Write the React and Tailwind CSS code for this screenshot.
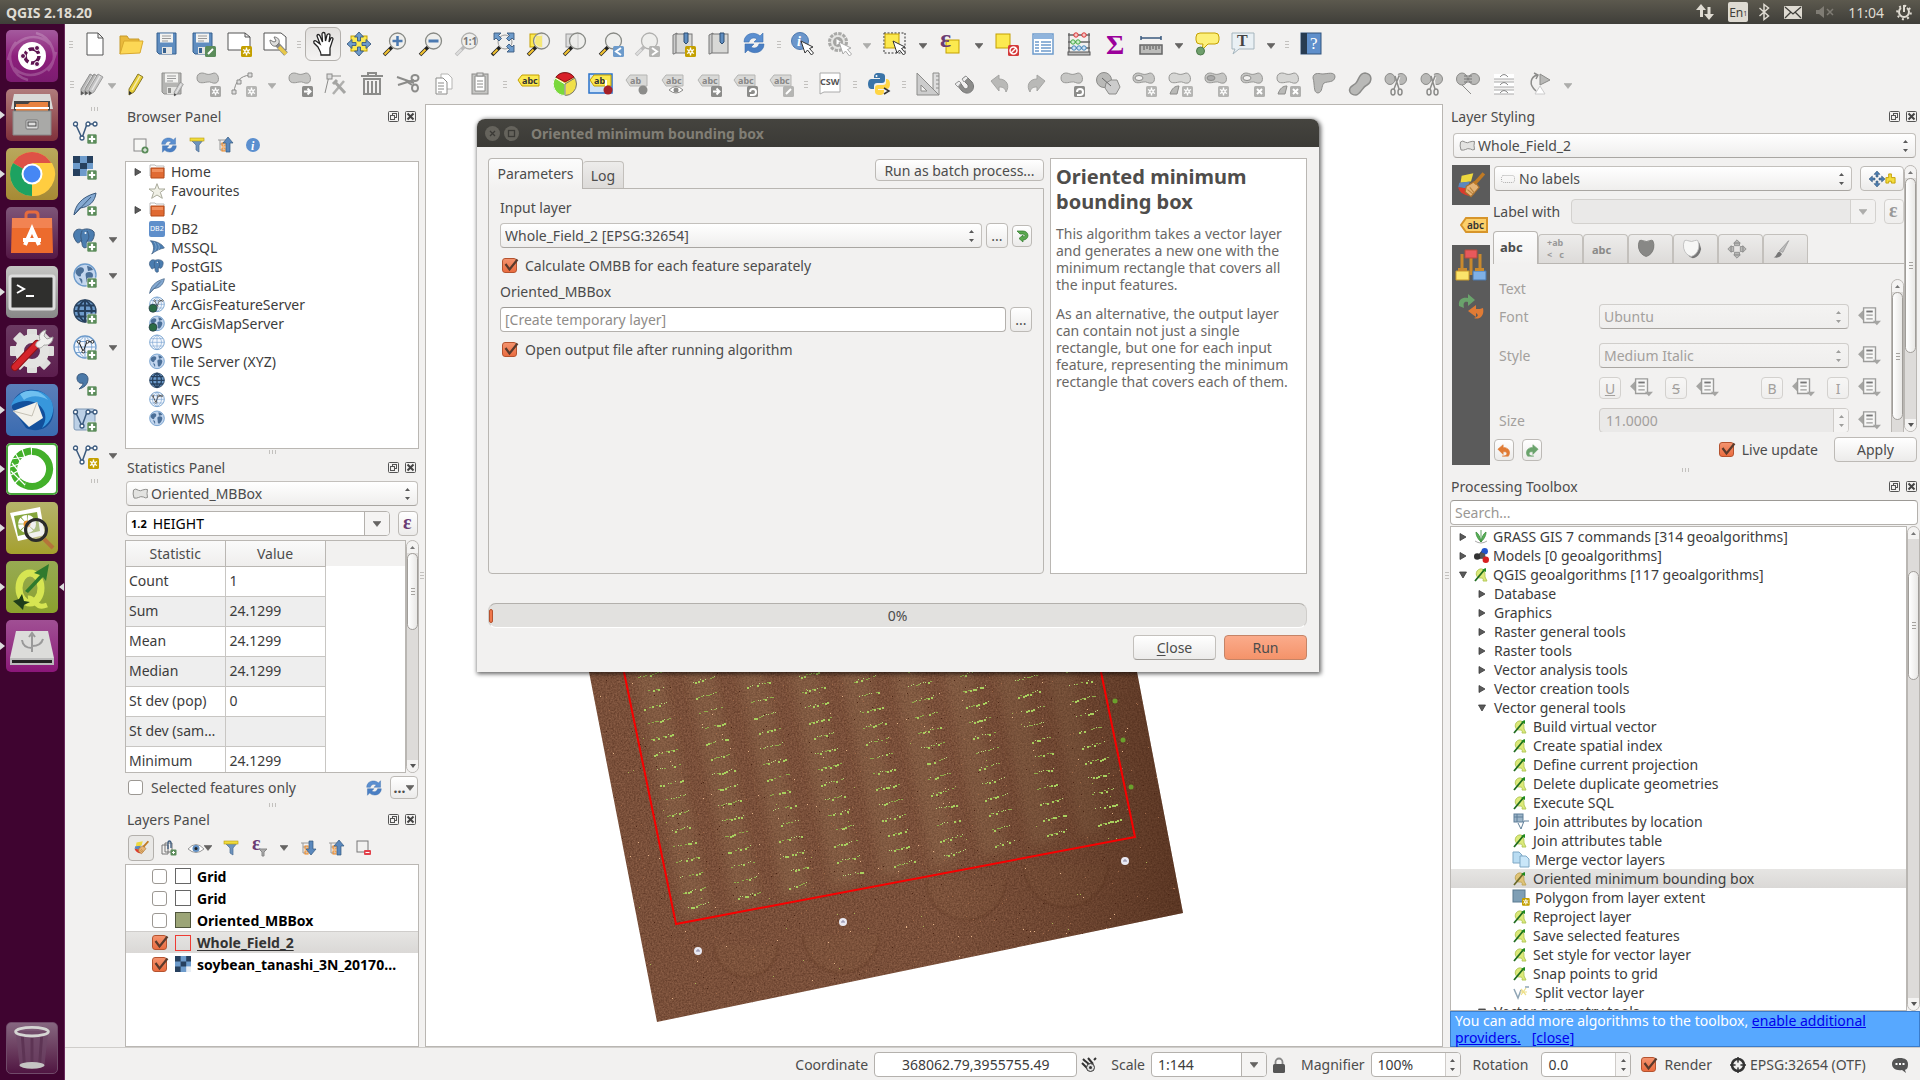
import React from "react";

/* ---------- primitives ---------- */

const Svg = ({ s = 24, vb = 24, className = "", children }) => (
  <svg width={s} height={s} viewBox={`0 0 ${vb} ${vb}`} className={`shrink-0 overflow-visible ${className}`} fill="none" aria-hidden="true">
    {children}
  </svg>
);

const G = "#b9b9b7";
const D = "#8c8c8a";
const BL = "#6d9bcb";
const NB = "#3b5a7e";
const sans = '"Noto Sans", sans-serif';

const Plus = ({ x = 14, y = 14 }) => (
  <g transform={`translate(${x} ${y})`}>
    <rect width="10" height="10" rx="1.5" fill="#5b8c5a" stroke="#f2f1f0" strokeWidth=".6" />
    <path d="M5 1.8v6.4M1.8 5h6.4" stroke="#fff" strokeWidth="2.2" />
  </g>
);
const Star = ({ x = 14, y = 14, c = "#c4a000" }) => (
  <g transform={`translate(${x} ${y})`}>
    <rect width="11" height="11" rx="1.5" fill={c} />
    <path d="M5.500 1.500v8M2 3.500l7 4M9 3.500l-7 4" stroke="#fff" strokeWidth="1.400" />
    <circle cx="5.500" cy="5.500" r="2.200" fill="#fff" />
    <circle cx="5.500" cy="5.500" r="1" fill={c} />
  </g>
);
const Badge = ({ c = "#8c8c8a", d, x = 14, y = 14 }) => (
  <g transform={`translate(${x} ${y})`}>
    <rect width="11" height="11" rx="1.5" fill={c} />
    <path d={d} stroke="#fff" strokeWidth="2" fill="none" />
  </g>
);
const ARROW_R = "M2 5.500h6M5.500 2.500l3 3-3 3";
const CROSS = "M3 3l5 5M8 3l-5 5";
const TURN = "M3 9h3a3 3 0 1 0-3-3";
const SLASH = "M3 8l5-5";

const Down = ({ dim }) => (
  <svg width="8" height="6" viewBox="0 0 8 6" className="shrink-0" aria-hidden="true">
    <path d="M0 0.500h8L4 5.500z" fill={dim ? "#adadab" : "#666462"} stroke={dim ? "#a5a5a3" : "#555"} strokeWidth="0.500" />
  </svg>
);
const UpDown = ({ dim }) => (
  <svg width="7" height="14" viewBox="0 0 7 14" className="shrink-0" aria-hidden="true">
    <path d="M1 4h5L3.500 1zM1 10h5L3.500 13z" fill={dim ? "#9e9e9c" : "#5a5a5a"} />
  </svg>
);

const Combo = ({ label, value, icon, dim, className = "" }) => (
  <div className={`relative flex h-[25px] items-center rounded border border-b-[#a9a6a2] bg-linear-to-b ${dim ? "border-[#d0cecb] from-[#f4f3f2] to-[#efeeed] text-[#a3a09d]" : "border-[#c3c0bc] from-white to-[#efeeed] text-[#4c4c4c]"} ${className}`}>
    {icon && <span className="pointer-events-none absolute left-[5px] flex">{icon}</span>}
    <select aria-label={label} disabled={dim} className={`h-full w-full appearance-none bg-transparent pr-5 opacity-100 outline-none ${icon ? "pl-6" : "pl-1"}`}>
      <option>{value}</option>
    </select>
    <span className="pointer-events-none absolute right-1.5 flex"><UpDown dim={dim} /></span>
  </div>
);

const Check = ({ id, checked, label }) => (
  <span className="relative flex size-[15px] shrink-0">
    <input id={id} type="checkbox" defaultChecked={checked} aria-label={label} className="peer size-[15px] appearance-none rounded-[3px] border border-[#9c9893] bg-white checked:border-[#b5532f] checked:bg-linear-to-b checked:from-[#f4936e] checked:to-[#ea6c3f]" />
    <svg width="18" height="15" viewBox="0 0 18 15" className="pointer-events-none absolute top-0 left-0 hidden peer-checked:block" aria-hidden="true">
      <path d="M3.500 6l4 5.500L15.500 1.500" stroke="#5a3a2c" strokeWidth="2.200" fill="none" />
    </svg>
  </span>
);

const SmallBtn = ({ label, dim, className = "", children }) => (
  <button aria-label={label} className={`flex shrink-0 items-center justify-center rounded border bg-linear-to-b ${dim ? "border-[#d3d1ce] from-[#f7f6f5] to-[#efeeed] text-[#a3a09d]" : "border-[#bdbab6] from-white to-[#ecebea] text-[#4c4c4c]"} ${className}`}>
    {children}
  </button>
);

const Spin = ({ id, value, dim, className = "" }) => (
  <div className={`flex h-[25px] overflow-hidden rounded border ${dim ? "border-[#cfccc9] bg-[#eae9e8] text-[#a3a09d]" : "border-[#b4b1ad] bg-white text-[#3c3c3c]"} ${className}`}>
    <input id={id} defaultValue={value} disabled={dim} className="min-w-0 flex-1 bg-transparent px-1.5 outline-none" />
    <span className="flex w-[15px] items-center justify-center border-l border-[#cfccc9] bg-[#f5f4f3]"><UpDown dim={dim} /></span>
  </div>
);

const VHandle = ({ className = "" }) => (
  <div className={`flex shrink-0 flex-col items-center justify-center gap-0.5 ${className}`}>
    {[0, 1, 2].map((i) => <i key={i} className="h-px w-1 bg-[#c3c1be]" />)}
  </div>
);
const HHandle = ({ className = "" }) => (
  <div className={`flex shrink-0 items-center justify-center gap-0.5 ${className}`}>
    {[0, 1, 2].map((i) => <i key={i} className="h-1 w-px bg-[#c3c1be]" />)}
  </div>
);

const Scroll = ({ before, thumb, after = "flex-1", className = "" }) => (
  <div className={`flex w-[13px] shrink-0 flex-col overflow-hidden rounded-full border border-[#b9b6b2] bg-[#dddbd9] ${className}`} aria-hidden="true">
    <div className={`flex h-3 shrink-0 items-center justify-center bg-[#f4f3f2] ${before}`}>
      <svg width="5" height="3"><path d="M0 3h5L2.500 0z" fill="#777" /></svg>
    </div>
    <div className={`flex shrink-0 flex-col items-center justify-center gap-0.5 rounded-full border border-[#a09d99] bg-linear-to-r from-white to-[#e9e8e6] ${thumb}`}>
      {[0, 1, 2].map((i) => <i key={i} className="h-px w-1 bg-[#a5a29e]" />)}
    </div>
    <div className={after} />
    <div className="flex h-3 shrink-0 items-center justify-center bg-[#f4f3f2]">
      <svg width="6" height="4"><path d="M0 0h6L3 4z" fill="#555" /></svg>
    </div>
  </div>
);

const DockTitle = ({ children }) => (
  <header className="flex h-[25px] shrink-0 items-center gap-1.5 pr-[3px] pl-px">
    <h2 className="flex-1">{children}</h2>
    <button aria-label={`Float ${children}`}>
      <Svg s={11} vb={11}><rect x=".5" y=".5" width="10" height="10" rx="1" stroke="#555" /><rect x="4.500" y="2.500" width="4" height="4" stroke="#555" /><rect x="2.500" y="4.500" width="4" height="4" fill="#f2f1f0" stroke="#555" /></Svg>
    </button>
    <button aria-label={`Close ${children}`}>
      <Svg s={11} vb={11}><rect x=".5" y=".5" width="10" height="10" rx="1" stroke="#555" /><path d="M2.500 2.500l6 6M8.500 2.500l-6 6" stroke="#444" strokeWidth="2" /></Svg>
    </button>
  </header>
);

/* ---------- toolbar icons ---------- */

const Lens = ({ dim, children }) => (
  <>
    <path d="M1 23l8-8" stroke={dim ? "#bbb" : "#222"} strokeWidth="3.500" />
    <path d="M1.500 22.500l5-5" stroke={dim ? "#ddd" : "#f2c230"} strokeWidth="2.200" />
    <circle cx="14.500" cy="9" r="8" fill="#eeeeec" fillOpacity=".85" stroke={dim ? "#b0b0ae" : "#888a85"} strokeWidth="1.300" />
    {children}
  </>
);
const Refresh = ({ s = 22 }) => (
  <Svg s={s} vb={22}>
    <path d="M1 10c0-9 11-11 16-6l3-3v9h-9l3-3C11 5 7 6 6 10z" fill="#5b8fd0" stroke="#3d6fae" strokeWidth=".6" />
    <path d="M21 12c0 9-11 11-16 6l-3 3v-9h9l-3 3c3 2 7 1 8-3z" fill="#4a7fc4" stroke="#3d6fae" strokeWidth=".6" />
  </Svg>
);
const Blob = ({ fill = "#c6c6c4" }) => (
  <path d="M1 6c0-5 5-6 9-4 3 1 5 0 8-1 5 0 6 9 2 10-4 1-5-2-9-1-4 1-10 2-10-4z" fill={fill} stroke="#989896" />
);
const Page = () => <path d="M4 1h11l5 5v17H4zM15 1v5h5" fill="#fff" stroke="#555" />;
const Floppy = ({ c = "#5f8dc0", e = "#37618f" }) => (
  <>
    <path d="M2 1h19v21H4l-2-2z" fill={c} stroke={e} />
    <rect x="5" y="1.500" width="13" height="9" fill="#f3f3f1" /><path d="M7 4h9M7 6.500h9M7 9h6" stroke="#999" />
    <rect x="7" y="15" width="10" height="7" fill="#e5e5e3" /><rect x="8" y="16" width="3" height="5" fill={e} />
  </>
);
const Pencil = ({ c = "#e8cf3a", e = "#8a7a2a" }) => (
  <><path d="M5 17L14 2l5 3-9 15-5 3z" fill={c} stroke={e} /><path d="M8 18l8-14" stroke="#fff" strokeOpacity=".6" strokeWidth="1.500" /><path d="M5 19v4l3-2z" fill="#333" /></>
);
const Tag = ({ dim, t = "abc" }) => (
  <>
    <path d="M1 8l4-5h17v11H5z" fill={dim ? "#d9d9d7" : "#fce94f"} stroke={dim ? "#b5b5b3" : "#c4a000"} />
    <text x="5" y="12" fontSize="9" fontWeight="700" fontFamily={sans} fill={dim ? "#888" : "#333"}>{t}</text>
  </>
);
const Book = () => (<><path d="M2 3l4-2v19l-3 2H2z" fill="#ccc" stroke="#777" /><rect x="5" y="2" width="16" height="19" fill="#d8d8d6" stroke="#777" /><path d="M13 1h4v9l-2 2-2-2z" fill="#5f8dc0" stroke="#2e4e72" /></>);
const Cursor = ({ x = 10, y = 9, dim }) => <path transform={`translate(${x} ${y})`} d="M0 0l4 12 2.500-3 4 5 2-2-4-4.500 3.500-1.500z" fill="#fff" stroke={dim ? "#aaa" : "#333"} />;
const FourWay = ({ c = NB, f = BL }) => (
  <path d="M12 0l4.500 5h-3v4h-3V5h-3zM12 24l4.500-5h-3v-4h-3v4h-3zM0 12l5-4.500v3h4v3H5v3zM24 12l-5-4.500v3h-4v3h4v3z" fill={f} stroke={c} strokeWidth=".9" />
);
const Scissor = () => (<><ellipse cx="6" cy="7" rx="5" ry="5.500" fill={G} stroke={D} /><ellipse cx="17" cy="7" rx="5.500" ry="5.500" fill={G} stroke={D} /><path d="M12 1l3 16M15 5l-5 12" stroke="#f2f1f0" strokeWidth="3" /><path d="M15 4l-5 13M11 4l4 13" stroke={D} strokeWidth="1.500" /><ellipse cx="9" cy="20" rx="2" ry="3" stroke={D} strokeWidth="1.500" /><ellipse cx="16" cy="20" rx="2" ry="3" stroke={D} strokeWidth="1.500" /></>);
const Eps = ({ size = 22, x = 0, y = 15, c = "#6b3c74" }) => <text x={x} y={y} fontSize={size} fontFamily='"Liberation Serif", serif' fontWeight="700" fill={c}>ε</text>;
const Vec = ({ c = NB }) => (<><path d="M2.500 4l6.500 14L14 4h8" stroke={c} strokeWidth="1.500" />{[[2.5, 4], [9, 18], [15, 4], [22, 4]].map(([x, y]) => <circle key={x} cx={x} cy={y} r="2" fill="#fff" stroke={c} strokeWidth="1.300" />)}</>);
const Checker = () => (<>
  <rect width="20" height="20" fill={BL} />
  <path d="M0 0h7v7H0zM14 0h6v7h-6zM7 7h7v6H7zM0 13h7v7H0z" fill="#26405e" /><path d="M14 13h6v7h-6z" fill="#e8eef5" />
</>);
const Feather = () => (<><path d="M1 23C2 14 8 5 23 1c-1 8-6 14-16 15z" fill="#84a9d1" stroke={NB} /><path d="M1 23L18 5" stroke={NB} /></>);
const Elephant = () => (<><path d="M1 5c2-5 7-4 8-3 4-2 10-1 12 2 1 4-1 8-3 10l-4-1v6c-3 2-5 0-5-4l-1-3c-1 3-4 4-5 1C1 10 0 8 1 5z" fill="#4b7db0" stroke={NB} /><path d="M9 3c-2 4-1 8 0 10M14 13c3-3 2-7 0-10" stroke={NB} /><circle cx="12.500" cy="5" r="1" fill="#fff" /></>);
const Globe = ({ dark, map }) => (<>
  <circle cx="12" cy="11" r="11" fill={dark ? "#6d9bcb" : map ? "#c3d6ee" : "#f4f8fd"} stroke={dark ? "#2c4561" : "#6d9bcb"} strokeWidth="1.300" />
  {map ? <path d="M4 5c3-3 7-2 7 1s-3 3-3 5-2 2-4 0-2-4 0-6zM13 9c3-2 7-1 7 2s-3 8-5 8-2-3-2-5-1-3 0-5zM14 2c2 0 5 1 6 4l-5 1zM6 14c3 0 4 2 3 6z" fill="#4b6f98" />
    : <path d="M1 11h22M3 5.500h18M3 16.500h18M12 0v22M12 0C3 6 3 16 12 22M12 0c9 6 9 16 0 22" stroke={dark ? "#26405e" : "#7ea6d3"} strokeWidth={dark ? 2 : 1} />}
</>);
const Funnel = () => <><path d="M1 2h14l-5 6v7l-3-2V8z" fill="#6d93bd" stroke="#4a6d93" strokeWidth=".7" /><rect x="1" y="1" width="14" height="3" fill="#f0dc3c" stroke="#b89c10" strokeWidth=".6" /></>;
const TreeArrow = ({ up }) => (<><path d="M1 3h9M3 3v10h4M3 7h4" stroke="#999" /><rect x="5" y="6" width="3" height="3" stroke="#f0861d" /><rect x="5" y="11" width="3" height="3" stroke="#f0861d" /><path d={up ? "M11 0l5 6h-3v9H9V6H6z" : "M11 15l5-6h-3V1H9v8H6z"} fill="#5a88bd" stroke="#34597f" strokeWidth=".7" /></>);
const Brush = ({ s = 24 }) => (
  <Svg s={s}><path d="M4 4l10-2-2 7-9 1z" fill="#edd83e" /><path d="M2 10l9-1-2 6-8-1z" fill="#5a87bd" /><path d="M1 14l8 1 3 6c-4 1-10-2-11-7z" fill="#dd3a2c" /><path d="M8 13l7-4 4 5-7 8-5-4z" fill="#e6b476" stroke="#a8702f" /><path d="M15 11l8-9" stroke="#c07a24" strokeWidth="3" /><path d="M9 16l5 4M11 14l4 5" stroke="#b9833f" /></Svg>
);

const row1 = [
  ["handle"],
  ["New project", <Page />],
  ["Open project", <><path d="M1 22V4h7l2 3h10v4" fill="#e9b93c" stroke="#c79a2a" /><path d="M1 22L5 9h19l-3 12z" fill="#fcd755" stroke="#d9a92e" /></>],
  ["Save project", <Floppy />],
  ["Save project as", <><Floppy /><Badge c="#5b8c5a" d={SLASH} /></>],
  ["New print composer", <><path d="M1 1h17l5 4v13H1zM18 1v4h5" fill="#fff" stroke="#555" /><Star /></>],
  ["Composer manager", <><path d="M1 1h17l5 4v13H1z" fill="#fff" stroke="#555" /><path d="M12 10l11 12" stroke="#888" strokeWidth="5" /><path d="M16 15l7 7" stroke="#e9c94a" strokeWidth="3.500" /><path d="M7 8c0 4 3 7 6 6l3-3c1-3-1-6-5-6l2 4-2 1z" fill="#ddd" stroke="#777" /></>],
  ["handle"],
  ["Pan map", <path d="M7 15L3 11c-1-2 1-3 2-2l4 3L6 4c0-2 2-2 3 0l2.500 6L11 2c0-2 3-2 3 0l.5 7L16 3c1-2 3-1 3 0l-1 7 2-4c1-1 2 0 2 1l-3 9v7H10c0-4-2-5-3-8z" fill="#fff" stroke="#222" strokeWidth="1.300" />, { on: true }],
  ["Pan to selection", <><rect x="4" y="4" width="16" height="15" fill="#fce94f" stroke="#c4a000" /><FourWay /></>],
  ["Zoom in", <Lens><path d="M14.500 4v10M9.500 9h10" stroke="#4b79b0" strokeWidth="2.500" /></Lens>],
  ["Zoom out", <Lens><path d="M9.500 9h10" stroke="#4b79b0" strokeWidth="3" /></Lens>],
  ["Zoom native", <Lens dim><text x="8" y="13" fontSize="10" fontWeight="700" fontFamily={sans} fill="#777">1:1</text></Lens>],
  ["Zoom full", <><path d="M1 23l8-8" stroke="#222" strokeWidth="3.500" /><path d="M2 22l4.500-4.500" stroke="#f2c230" strokeWidth="2" /><circle cx="14" cy="10" r="7" fill="#eee" stroke="#999" /><path d="M3 1h7L7.500 3.500l3 3-2.500 2.500-3-3L3 8zM23 1h-7l2.500 2.500-3 3 2.500 2.500 3-3L23 8zM23 20h-7l2.500-2.500-3-3 2.500-2.500 3 3 2-2z" fill={BL} stroke={NB} strokeWidth=".9" /></>],
  ["Zoom to selection", <><rect x="3" y="2" width="12" height="13" fill="#fce94f" stroke="#c4a000" /><Lens><path d="M9 4h6v11a8 8 0 0 1-7-4z" fill="#f5e878" /></Lens></>],
  ["Zoom to layer", <><rect x="3" y="2" width="12" height="13" fill="#ddd" stroke="#999" /><Lens><path d="M15 2v14" stroke="#ccc" /></Lens></>],
  ["Zoom last", <><Lens /><Badge c="#6d9bcb" d="M8 2L3 5.500 8 9" /></>],
  ["Zoom next", <><Lens dim /><Badge c="#b5b5b3" d="M3 2l5 3.500L3 9" /></>],
  ["New bookmark", <><Book /><Star /></>],
  ["Show bookmarks", <Book />],
  ["Refresh", <Refresh />],
  ["handle"],
  ["Identify features", <><circle cx="9" cy="9" r="8.500" fill="#6b96cb" stroke="#4f7ab0" /><text x="6" y="14" fontSize="14" fontStyle="italic" fontWeight="700" fontFamily='"Liberation Serif", serif' fill="#fff">i</text><Cursor /></>],
  ["Run feature action", <><circle cx="11" cy="10" r="8.500" fill="#e5e5e3" stroke="#a9a9a7" strokeWidth="3" strokeDasharray="3.300 1.150" /><circle cx="11" cy="10" r="5" fill="#a5a5a3" /><path d="M9.500 7v6l4.500-3z" fill="#fff" /><Cursor dim x={12} y={10} /></>, { arrow: "dim" }],
  ["Select features", <><rect x="1" y="1" width="21" height="20" stroke="#333" strokeDasharray="2 1.500" /><rect x="2" y="2" width="14" height="14" fill="#fce94f" stroke="#c4a000" /><Cursor /></>, { arrow: true }],
  ["Select by expression", <><rect x="7" y="8" width="13" height="13" fill="#fce94f" stroke="#c4a000" /><Eps size={26} x={1} /></>, { arrow: true }],
  ["Deselect all", <><rect x="1" y="2" width="14" height="14" fill="#fce94f" stroke="#c4a000" /><rect x="13" y="13" width="11" height="11" rx="1.500" fill="#d43a3a" /><circle cx="18.500" cy="18.500" r="3.500" stroke="#fff" strokeWidth="1.500" /><path d="M16 21l5-5" stroke="#fff" strokeWidth="1.500" /></>],
  ["Attribute table", <><rect x="2" y="2" width="20" height="20" fill="#fff" stroke="#6d9bcb" strokeWidth="1.500" /><rect x="3" y="3" width="18" height="4" fill="#8fb4dd" /><path d="M4 10h4M10 10h10M4 13h4M10 13h10M4 16h4M10 16h10M4 19h4M10 19h10" stroke="#6d9bcb" strokeWidth="1.500" /></>],
  ["Field calculator", <><path d="M2 1v20M22 1v20M1 3h22M1 10h22M1 16h22" stroke="#666" strokeWidth="1.300" /><rect x="1" y="20" width="22" height="3" fill="#bbb" stroke="#555" />{[9, 17].map((x) => <circle key={x} cx={x} cy="3" r="2.200" fill="#f6c5c5" stroke="#d33" />)}{[6, 11].map((x) => <circle key={x} cx={x} cy="10" r="2.200" fill="#cdeecd" stroke="#4a4" />)}{[7, 12, 17].map((x) => <circle key={x} cx={x} cy="16" r="2.200" fill="#cfe0f5" stroke="#48b" />)}</>],
  ["Statistics", <text x="3" y="22" fontSize="28" fontWeight="700" fontFamily='"Liberation Serif", serif' fill="#9b009b">Σ</text>],
  ["Measure", <><path d="M2 6h20M2 4v4M22 4v4" stroke={NB} strokeWidth="1.500" /><rect x="1" y="13" width="22" height="9" fill="#bcbcba" stroke="#666" strokeWidth="1.500" /><path d="M5 14v4M8 14v3M11 14v4M14 14v3M17 14v4M20 14v3" stroke="#555" /></>, { arrow: true }],
  ["Map tips", <><path d="M5 1h15q4 0 4 4v3q0 4-4 4h-7l-6 6 1-6H5q-4 0-4-4V5q0-4 4-4z" fill="#fdf07a" stroke="#c4a000" /><circle cx="5.500" cy="19" r="4" fill="#6f9f6c" stroke="#4d7a4a" /></>],
  ["Text annotation", <><path d="M1 1h22v16H8l-6 5 2-5H1z" fill="#e9f0f4" stroke="#a5b5bd" /><text x="6" y="14" fontSize="16" fontWeight="700" fontFamily='"Liberation Serif", serif' fill="#444">T</text></>, { arrow: true }],
  ["handle"],
  ["Help", <><rect x="2" y="1" width="20" height="21" fill="#5f8fcb" stroke="#33557c" /><rect x="2" y="1" width="6" height="21" fill="#283c52" /><text x="11" y="17" fontSize="17" fontFamily='"Liberation Serif", serif' fill="#fff">?</text></>],
];

const row2 = [
  ["handle"],
  ["Current edits", <><g opacity=".8"><g transform="translate(-4 0)"><Pencil c="#aaa" e="#777" /></g><Pencil c="#a5a5a3" e="#777" /><g transform="translate(4 0)"><Pencil c="#bbb" e="#888" /></g></g></>, { tight: true }],
  ["Toggle editing", <Pencil />],
  ["Save layer edits", <><Floppy c="#b5b5b3" e="#8f8f8d" /><g transform="translate(11 9) scale(.65)"><Pencil c="#ccc" e="#888" /></g></>],
  ["Add feature", <><Blob /><Star c="#a9a9a7" /></>],
  ["Add circular string", <><path d="M2 20C3 10 8 4 18 3" stroke={D} /><path d="M0 18h4v4H0zM5 8h4v4H5zM16 1h4v4h-4z" fill="#ddd" stroke={D} /><Star c="#b5b5b3" /></>, { arrow: "dim" }],
  ["Move feature", <><Blob /><Badge d={ARROW_R} /></>],
  ["Node tool", <><path d="M1 21L5 4h12" stroke={D} /><rect x="3" y="2" width="5" height="5" fill="#ddd" stroke={D} /><path d="M9 22L20 9" stroke="#b0b0ae" strokeWidth="2.500" /><path d="M11 10l10 11M9 12l4-4" stroke="#a5a5a3" strokeWidth="3" /></>],
  ["Delete selected", <><path d="M1 4h22M8 3V1h8v2" stroke={D} strokeWidth="2" /><path d="M4 7h16v15H4zM8 9v12M12 9v12M16 9v12" stroke={D} strokeWidth="2" /></>],
  ["Cut features", <><path d="M1 5l17 6M2 13l16-5" stroke={D} strokeWidth="2" /><ellipse cx="19" cy="6" rx="3.500" ry="3" stroke={D} strokeWidth="2" /><ellipse cx="19" cy="16" rx="3" ry="3.500" stroke={D} strokeWidth="2" /><path d="M10 9l6 4" stroke={D} strokeWidth="2" /></>],
  ["Copy features", <><path d="M9 2h7l4 4v11H9z" fill="#fff" stroke="#b5b5b3" /><path d="M4 6h7l4 4v12H4z" fill="#fff" stroke={D} /><path d="M6 11h6M6 14h6M6 17h6M6 20h4" stroke={D} /></>],
  ["Paste features", <><rect x="4" y="2" width="16" height="20" fill="#c5c5c3" stroke={D} /><path d="M7 4h10v15H7z" fill="#fff" stroke={D} /><path d="M9 9h6M9 12h6M9 15h6" stroke={D} /><rect x="9" y="1" width="6" height="3" fill="#ddd" stroke={D} /></>],
  ["handle"],
  ["Layer labeling options", <Tag />],
  ["Layer diagram options", <><circle cx="12" cy="12" r="11.500" fill="#f0e04a" stroke="#777" /><path d="M12 12V23.500A11.500 11.500 0 0 1 2 6z" fill="#7ad83c" stroke="#fff" /><path d="M12 12v11.500M12 12L22 6" stroke="#777" /><path d="M12 10L3 5a11.500 11.500 0 0 1 18 0z" fill="#d8202a" stroke="#8c1118" /></>],
  ["Highlight pinned labels", <><rect x="0" y="2" width="23" height="19" fill="#cfe2f7" stroke="#2a72c9" strokeWidth="1.500" /><Tag t="ab" /><path d="M17 8v8" stroke="#fff" strokeWidth="2" /><circle cx="19" cy="18" r="4.500" fill="#a52028" /></>],
  ["Pin labels", <><Tag dim t="ab" /><circle cx="18" cy="18" r="4.500" fill={D} /></>],
  ["Show labels", <><Tag dim /><path d="M8 18q7-7 14 0q-7 6-14 0z" fill="#fff" stroke={D} /><circle cx="15" cy="18" r="2.500" fill={D} /></>],
  ["Move label", <><Tag dim /><Badge d={ARROW_R} /></>],
  ["Rotate label", <><Tag dim /><Badge d={TURN} /></>],
  ["Change label", <><Tag dim /><Badge c="#b5b5b3" d={SLASH} /></>],
  ["handle"],
  ["CSW", <><path d="M2 1h20v19H6l-4 2z" fill="#fff" stroke="#aaa" /><text x="2" y="13" fontSize="9" fontWeight="700" fontFamily={sans} fill="#555">CSW</text></>],
  ["handle"],
  ["Python console", <><path d="M12 1c-5 0-5 2-5 5h6v1H4C0 7 0 17 4 17h3v-3c0-2 1-3 3-3h5c2 0 3-1 3-3V4c0-2-2-3-6-3z" fill="#3a74a8" /><path d="M12 23c5 0 5-2 5-5h-6v-1h9c4 0 4-10 0-10h-1v3c0 2-1 3-3 3h-5c-2 0-3 1-3 3v4c0 2 2 3 4 3z" fill="#ffd544" /><circle cx="9.500" cy="4" r="1" fill="#fff" /><path d="M17 16l5 3-5 3" stroke="#333" strokeWidth="1.500" /></>],
  ["handle"],
  ["Advanced digitizing", <><path d="M1 1v22h22z" fill="#ccc" stroke={D} /><path d="M5 13v6h6z" fill="#f2f1f0" stroke={D} /><path d="M17 1h6v22L17 17z" fill="#ddd" stroke={D} /><path d="M20 4h3M20 8h3M20 12h3M20 16h3" stroke={D} /></>],
  ["Snapping", <><path d="M4 12l6 7c7 6 15-2 10-9l-6-6-4 3 6 6c1 3-2 5-4 3L7 9z" fill="#8c8c8a" stroke="#777" /><path d="M3 12l4-3 2 2-3 4zM10 7l4-3 2 2-4 4z" fill="#eee" stroke="#999" /></>],
  ["Undo", <path d="M3 9l8-6v4c8 0 11 7 7 13-1-4-3-5-7-5v4z" fill={G} stroke="#a5a5a3" />],
  ["Redo", <path d="M21 9l-8-6v4C5 7 2 14 6 20c1-4 3-5 7-5v4z" fill={G} stroke="#a5a5a3" />],
  ["Rotate feature", <><Blob /><Badge d={TURN} /></>],
  ["Simplify feature", <><circle cx="8" cy="8" r="7.500" fill={G} stroke={D} /><path d="M10 11l5-3h6l3 7-4 7h-7l-4-6z" fill="#ccc" stroke={D} /><path d="M6 6l9 8" stroke="#666" /></>],
  ["Add ring", <><Blob /><ellipse cx="7" cy="6" rx="4" ry="2.500" fill="#f2f1f0" stroke={D} /><Star c="#b5b5b3" /></>],
  ["Add part", <><Blob fill="#d6d6d4" /><path d="M2 22c2-6 5-8 9-8l-2 8z" fill={G} stroke={D} /><Star c="#b5b5b3" /></>],
  ["Fill ring", <><Blob /><ellipse cx="7" cy="6" rx="4" ry="2.500" fill="#aaa" stroke={D} /><Star c="#b5b5b3" /></>],
  ["Delete ring", <><Blob /><ellipse cx="7" cy="6" rx="4" ry="2.500" fill="#f2f1f0" stroke={D} /><Badge c="#b0b0ae" d={CROSS} /></>],
  ["Delete part", <><Blob fill="#d6d6d4" /><path d="M2 22c2-6 5-8 9-8l-2 8z" fill={G} stroke={D} /><Badge c="#b0b0ae" d={CROSS} /></>],
  ["Reshape features", <path d="M1 6c0-5 5-5 9-4 5 0 13-3 13 3-1 6-7 4-11 6-3 3-1 9-6 10C1 21 3 12 1 6z" fill={G} stroke={D} />],
  ["Offset curve", <path d="M2 20c-2-5 3-6 6-9C11 8 11 1 17 1c8 1 7 9 2 12-5 2-6 9-11 10-3 0-5-1-6-3z" fill={G} stroke={D} strokeWidth="1.500" />],
  ["Split features", <Scissor />],
  ["Split parts", <Scissor />],
  ["Merge features", <><ellipse cx="6" cy="7" rx="5.500" ry="6" fill={G} stroke={D} /><ellipse cx="18" cy="7" rx="5.500" ry="5.500" fill={G} stroke={D} /><path d="M8 4h8M8 7h8M8 10h8" stroke="#777" /><path d="M6 13l9 9" stroke={D} /></>],
  ["Merge attributes", <><path d="M2 2h20v5H2zM2 10h20v5H2zM2 18h20v4H2z" fill="#fff" /><path d="M2 7h20M2 10h20M2 15h20M2 18h20M2 22h20" stroke="#aaa" /><path d="M8 5q4-5 8 0M8 13q4-5 8 0M8 21q4-5 8 0" stroke="#888" /></>],
  ["Rotate point symbols", <><path d="M8 19C0 12 3 5 9 3M6 1l4 2-2 4" stroke={D} strokeWidth="1.500" /><path d="M12 2l10 6-10 5z" fill={G} stroke={D} /><path d="M12 14l5 8H7z" fill="#fff" stroke="#ccc" /></>, { arrow: "dim" }],
];

const Toolbar = ({ items, hw }) => (
  <div className="flex h-10 items-center" role="toolbar">
    {items.map(([name, art, o = {}], i) =>
      name === "handle" ? (
        <VHandle key={i} className={hw} />
      ) : (
        <React.Fragment key={i}>
          <button aria-label={name} className={`flex h-[34px] shrink-0 items-center justify-center ${o.tight ? "w-7" : "w-9"} ${o.on ? "rounded-md border border-[#b3b0ac] bg-linear-to-b from-[#e2e0de] to-[#f4f3f2]" : ""}`}>
            <Svg>{art}</Svg>
          </button>
          {o.tight && <button aria-label={`${name} menu`} className="flex w-3 shrink-0 justify-center pt-1"><Down dim /></button>}
          {o.arrow && <button aria-label={`${name} menu`} className="flex w-5 shrink-0 justify-center pt-1"><Down dim={o.arrow === "dim"} /></button>}
        </React.Fragment>
      )
    )}
  </div>
);

const sideTools = [
  ["Add vector layer", <><Vec /><Plus /></>],
  ["Add raster layer", <><Checker /><Plus /></>],
  ["Add SpatiaLite layer", <><Feather /><Plus /></>],
  ["Add PostGIS layer", <><Elephant /><Plus /></>, true],
  ["Add WMS layer", <><Globe map /><Plus /></>, true],
  ["Add WCS layer", <><Globe dark /><Plus /></>],
  ["Add WFS layer", <><Globe /><g transform="translate(4 3) scale(.7)"><Vec c="#222" /></g><Plus /></>, true],
  ["Add delimited text layer", <><path d="M4 6c0-6 11-6 11 1 0 6-5 9-9 10 3-3 4-4 4-6-3 1-6-1-6-5z" fill="#4b79a8" stroke={NB} /><Plus /></>],
  ["Add virtual layer", <><rect x="1" y="1" width="21" height="21" rx="2" fill="#bcd0e6" stroke="#7f98b5" /><Vec /><Plus /></>],
  ["New shapefile layer", <><Vec /><Star x={15} /></>, true],
];

/* ---------- launcher ---------- */

const gearTeeth = [0, 45, 90, 135, 180, 225, 270, 315];

const launcher = [
  ["Dash", "bg-linear-to-b from-[#a45a9e] via-[#8e1f7d] to-[#7b1c70]", <><path d="M2 30C6 8 30 0 44 14M50 22c-4 22-28 30-42 16M30 3c16 4 24 24 12 38M22 50C6 46-2 26 10 12" stroke="#fff" strokeOpacity=".2" strokeWidth="2.500" /><circle cx="26" cy="26" r="14" fill="#fff" /><circle cx="26" cy="26" r="7" stroke="#5e1452" strokeWidth="3.500" strokeDasharray="12 2.700" />{[[17, 26], [31, 18], [31, 34]].map(([x, y]) => <circle key={y} cx={x} cy={y} r="2.500" fill="#5e1452" stroke="#fff" />)}</>],
  ["Files", "bg-linear-to-b from-[#b07c7c] to-[#80303b]", <><path d="M8 5h36l3 15H5z" fill="#d9d9d7" /><path d="M8 12h36v12H8z" fill="#444" /><path d="M10 15h12l2-2h18v10H10z" fill="#e8823f" /><path d="M9 18h34v2H9z" fill="#fff" /><path d="M7 22h38v24H7z" fill="#a9a9a7" stroke="#888" /><rect x="20" y="31" width="12" height="9" rx="1" fill="#ddd" stroke="#777" /><rect x="22" y="33" width="8" height="4" stroke="#444" /></>, true],
  ["Chrome", "bg-linear-to-b from-[#b9a85c] to-[#a68a34]", <><circle cx="26" cy="26" r="22" fill="#ffcd40" /><path d="M26 26L7 15a22 22 0 0 1 38 0z" fill="#de5246" /><path d="M26 26v22A22 22 0 0 1 7 15z" fill="#1da261" /><path d="M26 15h20a22 22 0 0 1-20 33l10-17z" fill="#ffcd40" /><circle cx="26" cy="26" r="10.500" fill="#fff" /><circle cx="26" cy="26" r="8.500" fill="#4687f4" /></>, true],
  ["Software", "bg-linear-to-b from-[#7e5578] to-[#541846]", <><path d="M20 12V8q0-3 3-3h6q3 0 3 3v4" stroke="#e56b3e" strokeWidth="3" /><path d="M6 11h40l1 35H5z" fill="#ec6b2d" /><path d="M6 11h40v10H6z" fill="#f28352" /><path d="M19 38l7-16 7 16M17 33h18" stroke="#fff" strokeWidth="4" /></>],
  ["Terminal", "bg-linear-to-b from-[#c5c5c3] to-[#888]", <><rect x="4" y="10" width="44" height="33" rx="2" fill="#2f2f2d" stroke="#ddd" strokeWidth="3" /><path d="M11 19l7 4-7 4M20 30h8" stroke="#fff" strokeWidth="2" /></>, true],
  ["Settings", "bg-linear-to-b from-[#6b3a62] to-[#5c1d4e]", <>{gearTeeth.map((a) => <rect key={a} x="21" y="4" width="10" height="10" rx="1" fill="#dededc" transform={`rotate(${a} 26 26)`} />)}<circle cx="26" cy="26" r="12.500" stroke="#e3e3e1" strokeWidth="9" /><path d="M9 42L31 19" stroke="#8e1317" strokeWidth="8" strokeLinecap="round" /><path d="M9 42L31 19" stroke="#d4252b" strokeWidth="6" strokeLinecap="round" /><path d="M30 21c-1-3 2-5 4-6-2-5 1-9 6-10l-2 6 3 3 6-2c0 5-4 9-9 8-2 2-4 5-8 1z" fill="#f0f0ee" stroke="#a5a5a3" /></>],
  ["Thunderbird", "bg-linear-to-b from-[#5b7fba] to-[#3a6bb0]", <><path d="M6 24C6 8 24 2 36 8c14 7 15 27 4 35-6 4-14 4-20 1z" fill="#12509c" /><path d="M5 22C10 4 36 1 45 16c5 10 1 22-9 28 5-8 4-15 0-20-6-9-22-9-31-2z" fill="#3797dc" /><path d="M14 10c8-6 22-4 28 6-8-5-18-5-24 0z" fill="#6fc0f0" /><path d="M7 27l24-9 6 16-14 9z" fill="#f3f1ea" /><path d="M7 27l19 5 5-14" stroke="#c5c1b5" /></>, true],
  ["Anaconda", "bg-white outline-2 -outline-offset-2 outline-[#4aa63c]", <><path d="M26 8.500a17.500 17.500 0 1 1-7 33.500" stroke="#43b02a" strokeWidth="7" /><path d="M25 8C4 10 2 36 19 42" stroke="#43b02a" strokeWidth="7" /><path d="M5 16l14-2M4 24l12-4M5 32l10-6M9 40l8-8M16 6l3 9M9 10l6 10M6 20l10 12M5 28l14 14" stroke="#fff" strokeWidth="1.200" /></>, true],
  ["Image viewer", "bg-linear-to-b from-[#b5b36a] to-[#a5a02c]", <><path d="M4 11l30-6 5 28-27 6z" fill="#fff" /><path d="M8 14l23-4 3 19-22 5z" fill="#85a63c" /><circle cx="21" cy="22" r="6" stroke="#fff" strokeWidth="6" strokeDasharray="4 .7" /><circle cx="21" cy="22" r="3.500" fill="#e8922d" /><circle cx="30" cy="28" r="10.500" fill="#ddd" fillOpacity=".45" stroke="#2b2b2b" strokeWidth="3" /><path d="M38 37l9 9" stroke="#b5743a" strokeWidth="4" /></>, true],
  ["QGIS", "bg-linear-to-b from-[#97aa52] to-[#8ba12c]", <><ellipse cx="24" cy="27" rx="11" ry="15" stroke="#d6e552" strokeWidth="7" /><path d="M22 37c8-1 6 12 19 7" stroke="#d6e552" strokeWidth="5" /><path d="M19 30L34 14l-6-2 15-9-3 17-3-4-15 16z" fill="#2f7a2d" /><path d="M7 40l6-2 3-5 2 7 6 1-6 3-1 5-4-4z" fill="#1e3d1a" /></>, true],
  ["USB drive", "bg-linear-to-b from-[#a04f94] to-[#8b1679]", <><path d="M10 11h32l6 27H4z" fill="#dcdcda" /><path d="M4 38h44v7H4z" fill="#bbb" /><path d="M6 40h40v3H6z" fill="#222" /><path d="M26 32V15M26 28q-9 0-10-8M26 26q9 0 11-7M23 17l3-4 3 4" stroke="#999" strokeWidth="2" /></>, true],
];

const Launcher = () => (
  <nav className="flex w-[65px] shrink-0 flex-col justify-between border-r border-[#6a2a5c] bg-[#3f0430] pt-1.5 pb-1.5">
    <ul className="flex flex-col gap-[7px]">
      {launcher.map(([name, bg, art, run]) => (
        <li key={name} className="relative flex items-center pl-1.5">
          {run && <svg width="5" height="8" className="absolute left-0" aria-hidden="true"><path d="M0 0l5 4-5 4z" fill="#ddd" /></svg>}
          <button aria-label={name} className={`flex size-[52px] items-center justify-center overflow-hidden rounded-[5px] ${bg}`}><Svg s={52} vb={52}>{art}</Svg></button>
          {name === "QGIS" && <svg width="5" height="8" className="absolute right-0" aria-hidden="true"><path d="M5 0L0 4l5 4z" fill="#ddd" /></svg>}
        </li>
      ))}
    </ul>
    <button aria-label="Trash" className="ml-1.5 size-[52px] rounded-[5px] border border-[#704a69] bg-linear-to-b from-[#866780] to-[#501542]">
      <Svg s={50} vb={52}><path d="M9 8l4 36q13 6 26 0l4-36z" fill="#6e4766" fillOpacity=".7" /><path d="M16 14l2 28M26 14v30M36 14l-2 28" stroke="#5d3454" strokeWidth="3" /><ellipse cx="26" cy="9" rx="17" ry="4.500" stroke="#d5d5d3" strokeWidth="3" /><ellipse cx="26" cy="44" rx="13" ry="3.500" fill="#c5c5c3" /></Svg>
    </button>
  </nav>
);

/* ---------- left docks ---------- */

const Folder = () => <Svg s={16} vb={16}><path d="M1 12V1h5l1 1h8v10z" fill="#fff" stroke="#bbb" /><path d="M2 14V4h13v10z" fill="#e06a33" stroke="#b34a1a" /><path d="M3 5h11v3H3z" fill="#f08e5c" /></Svg>;
const Mini = ({ children }) => <Svg s={16}>{children}</Svg>;
const Dot = () => <circle cx="6" cy="17" r="6" fill="#2a6b45" stroke="#234" />;

const browserItems = [
  ["Home", <Folder />, true],
  ["Favourites", <Mini><path d="M12 1l3 8h9l-7 5 3 9-8-5-8 5 3-9-7-5h9z" fill="#f0f0e6" stroke="#aaab9c" strokeWidth="1.500" /></Mini>],
  ["/", <Folder />, true],
  ["DB2", <Svg s={16} vb={16}><rect width="16" height="16" rx="2" fill="#5f8fcb" /><text x="1" y="10" fontSize="7" fontFamily={sans} fill="#fff">DB2</text></Svg>],
  ["MSSQL", <Mini><path d="M2 1c10 1 18 5 21 11-6 1-13 4-19 9 4-6 4-14-2-20z" fill="#4b7db0" stroke={NB} /><path d="M8 3c4 6 3 11 0 14M13 5c3 4 3 7 1 10" stroke="#9bbcdc" /></Mini>],
  ["PostGIS", <Mini><Elephant /></Mini>],
  ["SpatiaLite", <Mini><Feather /></Mini>],
  ["ArcGisFeatureServer", <Mini><Globe /><g transform="translate(7 3) scale(.6)"><Vec c="#222" /></g><Dot /></Mini>],
  ["ArcGisMapServer", <Mini><Globe map /><Dot /></Mini>],
  ["OWS", <Mini><Globe /></Mini>],
  ["Tile Server (XYZ)", <Mini><Globe map /></Mini>],
  ["WCS", <Mini><Globe dark /></Mini>],
  ["WFS", <Mini><Globe /><g transform="translate(4 3) scale(.7)"><Vec c="#222" /></g></Mini>],
  ["WMS", <Mini><Globe map /></Mini>],
];

const TreeArrowIcon = ({ open }) => (
  <svg width="8" height="8" viewBox="0 0 8 8" className="shrink-0" aria-hidden="true">
    <path d={open ? "M0.500 1h7L4 7z" : "M1 0.500v7L7 4z"} fill="#5a5a5a" stroke="#3c3c3c" strokeWidth=".8" />
  </svg>
);

const stats = [["Count", "1"], ["Sum", "24.1299"], ["Mean", "24.1299"], ["Median", "24.1299"], ["St dev (pop)", "0"], ["St dev (sam…", ""], ["Minimum", "24.1299"]];

const layers = [
  ["Grid", false, "border-[#666] bg-white"],
  ["Grid", false, "border-[#666] bg-white"],
  ["Oriented_MBBox", false, "border-[#4f553c] bg-[#9ca577]"],
  ["Whole_Field_2", true, "border-[#ee3b33] bg-transparent"],
  ["soybean_tanashi_3N_20170…", true, null],
];

const Polygon = () => <svg width="16" height="12" viewBox="0 0 16 12" aria-hidden="true"><path d="M1.500 2q2-2 5 .3 2 1 4-.3 3-1 5-.5-1 4 0 8-2 1-4-.5-3-1-5 .5-2 1-4.500.5Q.5 6 1.500 2z" fill="#e3e3e1" stroke="#8f8f8d" /></svg>;

const LeftDocks = () => (
  <aside className="flex w-[294px] shrink-0 flex-col">
    <div className="pl-px"><DockTitle>Browser Panel</DockTitle></div>
    <div className="flex h-8 shrink-0 items-center pl-0.5">
      {[
        ["Add selected layers", <><rect x="1" y="2" width="12" height="12" fill="#f7f7f5" stroke="#888" /><circle cx="12" cy="13" r="3.500" fill="#5b8c5a" /><path d="M12 11v4M10 13h4" stroke="#fff" /></>],
        ["Refresh", null],
        ["Filter", <Funnel />],
        ["Collapse", <TreeArrow up />],
        ["Properties", <><circle cx="8" cy="8" r="7" fill="#5b8fcf" /><text x="6" y="12.500" fontSize="12" fontWeight="700" fontStyle="italic" fontFamily='"Liberation Serif", serif' fill="#fff">i</text></>],
      ].map(([n, a]) => (
        <button key={n} aria-label={n} className="flex w-7 justify-center">{a ? <Svg s={16} vb={16}>{a}</Svg> : <Refresh s={16} />}</button>
      ))}
    </div>
    <ul className="h-72 shrink-0 overflow-hidden border border-[#bab7b3] bg-white text-[#3c3c3c]">
      {browserItems.map(([n, ic, arrow]) => (
        <li key={n} className="flex h-[19px] items-center pl-2">
          <span className="flex w-[15px]">{arrow && <TreeArrowIcon />}</span>
          {ic}
          <span className="pl-1.5">{n}</span>
        </li>
      ))}
    </ul>
    <HHandle className="h-1.5" />

    <div className="pl-px"><DockTitle>Statistics Panel</DockTitle></div>
    <Combo label="Layer" value="Oriented_MBBox" icon={<Polygon />} className="mt-px mr-px ml-px shrink-0" />
    <div className="mt-[5px] mr-px ml-px flex h-[25px] shrink-0 gap-2">
      <div className="flex flex-1 overflow-hidden rounded border border-[#b4b1ad] bg-white text-black">
        <span className="flex items-center pl-1 text-[11px] font-bold">1.2</span>
        <input aria-label="Field" defaultValue="HEIGHT" className="min-w-0 flex-1 pl-1.5 outline-none" />
        <button aria-label="Choose field" className="flex w-[25px] items-center justify-center border-l border-[#b4b1ad] bg-[#f5f4f3]"><Down /></button>
      </div>
      <SmallBtn label="Expression" className="w-5"><Svg s={14} vb={14}><Eps size={20} x={2} y={12} /></Svg></SmallBtn>
    </div>
    <div className="mt-1 flex h-[233px] shrink-0">
      <div className="flex-1 overflow-hidden border border-[#bab7b3] bg-white">
        <table className="w-full table-fixed border-collapse text-left text-[#3c3c3c]">
          <colgroup><col className="w-[99px]" /><col className="w-[100px]" /><col /></colgroup>
          <thead>
            <tr className="h-[25px] bg-linear-to-b from-[#fafafa] to-[#efeeed] text-center text-[#4c4c4c]">
              <th className="border-r border-b border-[#bab7b3] p-0 font-normal">Statistic</th>
              <th className="border-r border-b border-[#bab7b3] p-0 font-normal">Value</th>
              <td className="bg-[#f2f1f0] p-0" />
            </tr>
          </thead>
          <tbody>
            {stats.map(([a, b], i) => (
              <tr key={a} className="h-[30px]">
                <td className={`truncate border-r border-b border-[#c8c6c3] p-0 pb-0.5 pl-[3px] ${i % 2 ? "bg-[#eeeeee]" : ""}`}>{a}</td>
                <td className={`border-r border-b border-[#c8c6c3] p-0 pb-0.5 pl-1 ${i % 2 ? "bg-[#eeeeee]" : ""}`}>{b}</td>
                <td className="p-0" />
              </tr>
            ))}
          </tbody>
        </table>
      </div>
      <Scroll thumb="h-[77px]" />
    </div>
    <div className="flex h-[29px] shrink-0 items-center gap-2 pr-px pl-[3px]">
      <Check id="sel" />
      <label htmlFor="sel" className="flex-1">Selected features only</label>
      <button aria-label="Refresh statistics"><Refresh s={16} /></button>
      <SmallBtn label="More statistics" className="h-[23px] w-7 gap-px"><span className="font-bold">...</span><Down /></SmallBtn>
    </div>
    <HHandle className="h-[5px]" />

    <div className="pl-px"><DockTitle>Layers Panel</DockTitle></div>
    <div className="mb-px flex h-[31px] shrink-0 items-center pl-[3px]">
      <button aria-label="Layer styling" className="flex h-[26px] w-[26px] items-center justify-center rounded border border-[#b3b0ac] bg-[#e9e8e6]"><Brush s={15} /></button>
      <button aria-label="Add group" className="flex w-[30px] justify-center"><Svg s={16} vb={16}><path d="M1 5h6v9H1zM4 3h7v9H4z" fill="#f2f1f0" stroke="#777" /><path d="M7 9V3q0-2 1.500-2T10 3v5" stroke="#3b5a7e" strokeWidth="1.300" /><rect x="9.500" y="9.500" width="6" height="6" rx="1" fill="#5b8c5a" /><path d="M12.500 11v3M11 12.500h3" stroke="#fff" /></Svg></button>
      <button aria-label="Visibility" className="flex w-8 items-center justify-center"><Svg s={16} vb={16}><path d="M0 9q8-9 16 0q-8 7-16 0z" fill="#fff" stroke="#999" /><circle cx="8" cy="8.500" r="3.500" fill="#5f8dc0" /><circle cx="8" cy="8.500" r="1.500" fill="#222" /></Svg><Down /></button>
      <button aria-label="Filter legend" className="flex w-[30px] justify-center"><Svg s={16} vb={16}><Funnel /></Svg></button>
      <button aria-label="Filter by expression" className="flex w-[28px] justify-center"><Svg s={16} vb={16}><Eps size={20} y={10} /><path d="M7 9h8l-3 3v4h-2v-4z" fill="#aaa" stroke="#888" /></Svg></button>
      <button aria-label="Expression menu" className="flex w-5 justify-center"><Down /></button>
      <button aria-label="Expand all" className="flex w-[28px] justify-center"><Svg s={16} vb={16}><TreeArrow /></Svg></button>
      <button aria-label="Collapse all" className="flex w-[27px] justify-center"><Svg s={16} vb={16}><TreeArrow up /></Svg></button>
      <button aria-label="Remove layer" className="flex w-[28px] justify-center"><Svg s={16} vb={16}><rect x="2" y="1" width="11" height="11" stroke="#777" /><rect x="9" y="10" width="7" height="5" rx="1" fill="#e2404a" /><path d="M10.500 12.500h4" stroke="#fff" /></Svg></button>
    </div>
    <ul className="min-h-0 flex-1 overflow-hidden border border-[#bab7b3] bg-white font-bold text-black">
      {layers.map(([n, on, sw], i) => (
        <li key={i} className={`flex h-[22px] items-center pl-[26px] ${i === 3 ? "border-t border-[#cfcdcb] bg-linear-to-b from-[#e6e5e3] to-[#dad8d6] text-[#333]" : ""}`}>
          <Check id={`layer-${i}`} checked={on} />
          <span className="flex w-[28px] justify-center pl-1">{sw ? <i className={`size-4 border ${sw}`} /> : <Svg s={16} vb={20}><Checker /></Svg>}</span>
          <label htmlFor={`layer-${i}`} className={`ml-0.5 whitespace-nowrap ${i === 3 ? "underline underline-offset-2" : ""}`}>{n}</label>
        </li>
      ))}
    </ul>
  </aside>
);

/* ---------- map ---------- */

const rnd = (n) => {
  const v = Math.sin(n * 127.1) * 43758.5453;
  return v - Math.floor(v);
};
const plants = [];
for (let c = 0; c < 9; c++) {
  for (let r = 0; r < 17; r++) {
    const x = 260 + c * 51.5 - r * 3.2;
    const y = 803 - c * 10.5 - r * 15.4;
    if (y < 560) continue;
    for (let k = 0; k < 10; k++) {
      const q = rnd(c * 311 + r * 17 + k);
      if (q > 0.12) plants.push([Math.round(x + k * 2.4), Math.round(y - k * 0.6 + (q - 0.5) * 2), q]);
    }
  }
}
const specks = Array.from({ length: 700 }, (_, i) => [165 + rnd(i + 1) * 590, 565 + rnd(i + 900) * 350, rnd(i + 2000)]);

const MapDrawing = () => (
  <svg viewBox="0 0 1017 942" preserveAspectRatio="xMinYMin meet" className="absolute top-0 left-0 h-[942px] w-[1017px]" role="img" aria-label="Field orthophoto">
    <defs>
      <clipPath id="field"><path d="M100 250L150 500 231 917 757 808 711 567 650 250z" /></clipPath>
      <filter id="soil" x="0" y="0" width="100%" height="100%" colorInterpolationFilters="sRGB">
        <feTurbulence type="fractalNoise" baseFrequency="0.6" numOctaves="2" seed="4" />
        <feColorMatrix values="0.24 0.06 0 0 0.325  0.2 0.06 0 0 0.18  0.17 0.05 0 0 0.115  0 0 0 0 1" />
      </filter>
      <filter id="soft" x="-20%" y="-20%" width="140%" height="140%"><feGaussianBlur stdDeviation="4" /></filter>
      <linearGradient id="shade" x1="0" x2="1" y1="0" y2="0">
        <stop offset="0.600" stopColor="#3a1c0c" stopOpacity="0" />
        <stop offset="0.800" stopColor="#3a1c0c" stopOpacity=".2" />
        <stop offset="1" stopColor="#3a1c0c" stopOpacity=".5" />
      </linearGradient>
    </defs>
    <g clipPath="url(#field)">
      <rect x="100" y="540" width="670" height="400" filter="url(#soil)" />
      <g filter="url(#soft)">
        {[0, 1, 2, 3, 4, 5, 6, 7, 8].map((c) => (
          <path key={c} d={`M${208 + c * 51.5} 560h26l${50 - c * 2} ${246 - c * 10}-26 5z`} fill="#a08560" fillOpacity=".2" />
        ))}
      </g>
      {[[320, 840, 32], [415, 830, 38], [540, 775, 40], [640, 760, 42]].map(([x, y, r]) => (
        <path key={x} d={`M${x - r} ${y}a${r} ${r} 0 0 0 ${r * 2} 0`} stroke="#512a19" strokeOpacity=".16" strokeWidth="3" fill="#97704f" fillOpacity=".08" />
      ))}
      <rect x="160" y="560" width="600" height="370" fill="url(#shade)" />
      {specks.map(([x, y, q], i) => <rect key={i} x={Math.round(x)} y={Math.round(y)} width="1" height="1" fill={q > 0.85 ? "#e6b58a" : q > 0.75 ? "#a9b455" : q > 0.4 ? "#4a2414" : "#a06a4a"} />)}
      {plants.map(([x, y, q], i) => <rect key={i} x={x} y={y} width={q > 0.4 ? 2 : 1} height={q > 0.7 ? 2 : 1} fill={q > 0.7 ? "#a8cf5e" : q > 0.4 ? "#8fae4a" : "#b9d97a"} />)}
      {[[689, 596], [697, 635], [705, 682]].map(([x, y]) => <circle key={y} cx={x} cy={y} r="2.500" fill="#6aa02c" />)}
    </g>
    <path d="M198 567L250 819 709 732 675 567" stroke="#f80000" strokeWidth="2" fill="none" />
    {[[272, 846], [417, 817], [699, 756]].map(([x, y]) => (
      <g key={x}><circle cx={x} cy={y} r="4" fill="#e9e9f2" /><path d={`M${x - 2} ${y}h4M${x} ${y - 2}v2`} stroke="#8a88a5" /></g>
    ))}
  </svg>
);

/* ---------- dialog ---------- */

const Turn = ({ c, flip, s = 16 }) => (
  <Svg s={s} vb={16}><g transform={flip ? "translate(16 0) scale(-1 1)" : ""}><path d="M1 7l6-5v3c7 0 9 6 6 10H6c4 0 6-2 5-4-1-1-2-1-4-1v3z" fill={c} stroke={c} strokeOpacity=".7" /></g></Svg>
);

const Dialog = () => (
  <section role="dialog" aria-label="Oriented minimum bounding box" className="absolute top-3.5 left-[51px] flex h-[553px] w-[842px] flex-col rounded-t-lg bg-[#f2f1f0] shadow-[1px_1px_4px_1px_rgba(0,0,0,0.6)]">
    <header className="flex h-7 shrink-0 items-center rounded-t-lg bg-linear-to-b from-[#45443f] to-[#3b3a36] pl-2">
      <button aria-label="Close window" className="mr-1"><Svg s={15} vb={15}><circle cx="7.500" cy="7.500" r="7.500" fill="#65635c" /><path d="M5 5l5 5M10 5l-5 5" stroke="#3b3a36" strokeWidth="1.300" /></Svg></button>
      <button aria-label="Maximize window"><Svg s={15} vb={15}><circle cx="7.500" cy="7.500" r="7.500" fill="#65635c" /><rect x="4.500" y="4.500" width="6" height="6" stroke="#3b3a36" strokeWidth="1.300" /></Svg></button>
      <h1 className="pl-3 font-bold text-[#817e75]">Oriented minimum bounding box</h1>
    </header>
    <div className="flex min-h-0 flex-1 flex-col pt-[11px] pr-3 pl-[11px]">
      <div className="flex h-[416px] shrink-0 gap-1.5">
        <div className="flex flex-1 flex-col">
          <div className="flex h-[30px] items-end justify-between">
            <div role="tablist" className="flex items-end">
              <button role="tab" aria-selected="true" className="relative -mb-px h-[31px] w-[95px] rounded-t border border-b-0 border-[#b9b6b2] bg-linear-to-b from-[#fcfcfc] to-[#f2f1f0] pb-0.5">Parameters</button>
              <button role="tab" className="h-[27px] w-[41px] rounded-t border border-b-0 border-l-0 border-[#c3c0bc] bg-linear-to-b from-[#edeceb] to-[#dddbd9]">Log</button>
            </div>
            <SmallBtn label="Run as batch process" className="mb-[7px] h-[22px] w-[169px]">Run as batch process...</SmallBtn>
          </div>
          <div className="flex flex-1 flex-col rounded-b border border-[#b9b6b2] px-[11px] pt-2">
            <label htmlFor="input-layer" className="h-[26px] leading-[22px]">Input layer</label>
            <div className="flex items-center gap-1">
              <Combo label="Input layer" value="Whole_Field_2 [EPSG:32654]" className="flex-1" />
              <SmallBtn label="Browse" className="h-[25px] w-[22px]">...</SmallBtn>
              <SmallBtn label="Iterate over features" className="h-[22px] w-5">
                <Svg s={14} vb={14}><path d="M2 2h6a5 4.500 0 0 1 0 9v2L4 9.500 8 6v2q2-.5 2-1.500T8 5H5z" fill="#5aa84f" stroke="#2f7a2d" strokeWidth=".7" /></Svg>
              </SmallBtn>
            </div>
            <div className="mt-[9px] flex h-[17px] items-center gap-2 pl-0.5">
              <Check id="ombb" checked /><label htmlFor="ombb">Calculate OMBB for each feature separately</label>
            </div>
            <label htmlFor="mbbox" className="mt-[7px] h-[26px] leading-[22px]">Oriented_MBBox</label>
            <div className="flex gap-1">
              <input id="mbbox" placeholder="[Create temporary layer]" className="h-[25px] flex-1 rounded border border-[#b4b1ad] border-t-[#9c9995] bg-white px-1 outline-none placeholder:text-[#8f8c89]" />
              <SmallBtn label="Browse output" className="h-[25px] w-[22px]">...</SmallBtn>
            </div>
            <div className="mt-[9px] flex h-[17px] items-center gap-2 pl-0.5">
              <Check id="open" checked /><label htmlFor="open">Open output file after running algorithm</label>
            </div>
          </div>
        </div>
        <article className="w-[257px] shrink-0 border border-[#bab7b3] bg-white px-[5px] pt-[5px] leading-[17px] text-[#6a6866]">
          <h3 className="text-[20px] leading-[25px] font-bold text-[#4f4d4b]">Oriented minimum bounding box</h3>
          <p className="mt-[11px]">This algorithm takes a vector layer<br />and generates a new one with the<br />minimum rectangle that covers all<br />the input features.</p>
          <p className="mt-3">As an alternative, the output layer<br />can contain not just a single<br />rectangle, but one for each input<br />feature, representing the minimum<br />rectangle that covers each of them.</p>
        </article>
      </div>
      <div role="progressbar" aria-valuenow="0" className="relative mt-[29px] flex h-[25px] shrink-0 items-center justify-center rounded-lg border border-t-[#b3b0ac] border-r-[#cfcdca] border-b-white border-l-[#cfcdca] bg-[#e2e1df]">
        <i className="absolute left-0 h-3.5 w-1 rounded-xs border border-[#b5532f] bg-[#f0764a]" />
        0%
      </div>
      <div className="mt-[7px] flex justify-end gap-2">
        <button className="h-[25px] w-[83px] rounded border border-[#c3c0bc] border-b-[#a09d99] bg-linear-to-b from-white to-[#ecebea]"><span className="underline underline-offset-2">C</span>lose</button>
        <button className="h-[25px] w-[83px] rounded border border-[#c58467] bg-linear-to-b from-[#fbab8b] to-[#f4936a]">Run</button>
      </div>
    </div>
  </section>
);

/* ---------- right docks ---------- */

const Override = () => (
  <Svg s={22}><path d="M-1 10l6-6v12z" fill="#a5a5a3" /><path d="M5 2h13v16H5z" fill="#f7f7f6" stroke="#9c9c9a" strokeWidth="1.500" /><path d="M8 6h7" stroke="#777" strokeWidth="2" /><path d="M8 10h7M8 14h7" stroke="#9c9c9a" strokeWidth="1.500" /><path d="M15 16h9l-4.500 5z" fill="#a5a5a3" /></Svg>
);
const Shield = ({ f, c, sh }) => <Svg s={20}>{sh && <path d="M5 5q2-3 4 0 5 1 8 0 2-2 4 0l2 7q-2 10-10 11-7-2-9-10z" fill="#777" />}<path d="M3 2q2-1 4 0 5 2 8 0 3-1 4 0 2 4 1 9-2 8-9 10-7-2-9-10-1-5 1-9z" fill={f} stroke={c} /></Svg>;

const styleTabs = [
  <span className="text-[13px] font-bold">abc</span>,
  <span className="text-left text-[9px] leading-[12px] font-bold text-[#999]">+ab<br />&lt; &nbsp; c</span>,
  <span className="text-[11px] font-bold text-[#8a8a88]">abc</span>,
  <Shield f="#888886" c="#777775" />,
  <Shield f="#f7f7f6" c="#bbb" sh />,
  <Svg s={20}><path d="M12 1l4 4h-8zM12 23l4-4h-8zM1 12l4-4v8zM23 12l-4-4v8z" fill={G} stroke={D} /><path d="M9 5h6v3H9zM9 16h6v3H9zM5 9h3v6H5zM16 9h3v6h-3z" fill={G} stroke={D} /></Svg>,
  <Svg s={20}><path d="M2 22c4-1 3-6 7-7l3 3c-2 4-5 5-10 4z" fill="#777" /><path d="M9 14L20 2l-7 14z" fill="#bbb" stroke="#999" /></Svg>,
];

const Q = ({ sel }) => <Svg s={14} vb={14}><path d="M6 1c5-1 5 5 5 8l2 4H9c1-3-1-3-3-3-5 0-5-8 0-9z" fill={sel ? "#e0c477" : "#dcea7a"} stroke={sel ? "#c0a65a" : "#b5c95a"} /><path d="M1 13L11 1" stroke={sel ? "#6b6a2a" : "#1f6b1f"} strokeWidth="1.800" /><path d="M8 2l4-2v4z" fill="#1f8b1f" /></Svg>;

const tools = [
  [0, "GRASS GIS 7 commands [314 geoalgorithms]", "c", <Svg s={14} vb={14}><path d="M7 12C3 8 2 5 2 2c3 2 4 5 5 10zM7 12c4-4 5-7 5-10-3 2-4 5-5 10zM7 12V0" fill="#58b058" stroke="#3b8e3b" strokeWidth=".8" /><path d="M1 11q6 4 12 0" stroke="#aaa" /></Svg>],
  [0, "Models [0 geoalgorithms]", "c", <Svg s={15} vb={14}><path d="M3 9l5-6M4 9h7" stroke="#444" strokeWidth="2" /><circle cx="3" cy="8" r="3" fill="#333" /><circle cx="10" cy="3" r="3" fill="#2255cc" /><circle cx="8" cy="7" r="2.500" fill="#555" /><circle cx="11" cy="11" r="3" fill="#d82020" /></Svg>],
  [0, "QGIS geoalgorithms [117 geoalgorithms]", "o", <Q />],
  [1, "Database", "c"], [1, "Graphics", "c"], [1, "Raster general tools", "c"], [1, "Raster tools", "c"], [1, "Vector analysis tools", "c"], [1, "Vector creation tools", "c"], [1, "Vector general tools", "o"],
  [2, "Build virtual vector"], [2, "Create spatial index"], [2, "Define current projection"], [2, "Delete duplicate geometries"], [2, "Execute SQL"],
  [2, "Join attributes by location", "", <Svg s={16} vb={16}><rect x="1" y="0" width="9" height="8" fill="#9db5c8" stroke="#5f7f99" /><path d="M1 3h9M4 0v8M5 9l3 6 3-8h5" stroke="#5f7f99" /></Svg>],
  [2, "Join attributes table"],
  [2, "Merge vector layers", "", <Svg s={16} vb={16}><path d="M0 0h6l3 3v8H0z" fill="#b9dcf2" stroke="#7fa8c5" /><path d="M7 4h6l3 3v8H7z" fill="#c9e6f8" stroke="#7fa8c5" /></Svg>],
  [2, "Oriented minimum bounding box", "sel"],
  [2, "Polygon from layer extent", "", <Svg s={16} vb={16}><rect width="12" height="12" fill="#7f9fb5" stroke="#5a7a90" /><g transform="translate(9 8) scale(.7)"><Star x={0} y={0} /></g></Svg>],
  [2, "Reproject layer"], [2, "Save selected features"], [2, "Set style for vector layer"], [2, "Snap points to grid"],
  [2, "Split vector layer", "", <Svg s={16} vb={16}><path d="M1 4l4 9 3-8M12 2h4" stroke="#8fa5b5" strokeWidth="1.500" /><path d="M8 4l5 6M13 3l-5 7M7 7h7" stroke="#eee08a" strokeWidth="1.200" /></Svg>],
  [1, "Vector geometry tools", "o"],
];

const RightDocks = () => (
  <aside className="flex w-[470px] shrink-0 flex-col">
    <DockTitle>Layer Styling</DockTitle>
    <Combo label="Styled layer" value="Whole_Field_2" icon={<Polygon />} className="mt-1 mr-1 ml-[3px] shrink-0" />
    <div className="mt-[7px] flex h-[300px] shrink-0 pl-0.5">
      <div className="flex w-[38px] shrink-0 flex-col">
        <button aria-label="Symbology" className="flex h-10 items-center justify-center bg-[#5b5b5b]"><Brush s={28} /></button>
        <button aria-label="Labels" className="flex h-10 items-center justify-end pr-0.5">
          <svg width="28" height="16" viewBox="0 0 28 16" aria-hidden="true"><path d="M1 8l5-7h21v14H6z" fill="#fcd06a" stroke="#d7952a" strokeWidth="2" /><text x="7" y="12" fontSize="10" fontFamily={sans} fontWeight="600" fill="#333">abc</text></svg>
        </button>
        <div className="flex flex-1 flex-col items-center gap-3.5 bg-[#5b5b5b] pt-[5px]">
          <button aria-label="Style manager"><Svg s={30} vb={30}><path d="M6 4v15M24 4v15M15 8v17" stroke="#c98a2e" strokeWidth="3" /><path d="M9 0h12v8H9z" fill="#e8595c" stroke="#b94a3a" /><path d="M0 21h13v9H0z" fill="#fbe46a" stroke="#c99b2a" /><path d="M17 21h13v9H17z" fill="#7fb0e6" stroke="#4a79ae" /><path d="M2 18h9v3H2zM19 18h9v3h-9z" fill="#c98a2e" /></Svg></button>
          <button aria-label="History"><Svg s={26} vb={26}><path d="M1 12c-1-8 5-9 9-8V0l7 6-7 6V8c-4-1-5 1-4 6z" fill="#6aa36c" /><path d="M25 14c2 9-5 12-9 10 4-1 5-3 2-5v4l-8-6 8-6v4c3 0 5 0 7-1z" fill="#e07b35" /></Svg></button>
        </div>
      </div>
      <div className="flex min-w-0 flex-1 flex-col pr-[3px] pl-[3px]">
        <div className="flex h-[267px] shrink-0">
          <div className="flex min-w-0 flex-1 flex-col">
            <div className="flex gap-2 pt-px pl-px">
              <Combo label="Label mode" value="No labels" className="flex-1" icon={<svg width="16" height="10" aria-hidden="true"><rect x="1.500" y="1.500" width="13" height="7" rx="2" fill="none" stroke="#aaa" strokeDasharray="1 1" /></svg>} />
              <SmallBtn label="Label placement" className="h-[25px] w-[44px]"><Svg s={16}><FourWay f="#4b7db0" /></Svg><Svg s={11} vb={12}><path d="M1 11V5h3V1h3v4h4v6H7V9H4v2z" fill="#f2dc3e" stroke="#c4a000" /></Svg></SmallBtn>
            </div>
            <div className="mt-2 flex h-[25px] items-center gap-2">
              <label htmlFor="label-with" className="w-[70px] whitespace-nowrap">Label with</label>
              <div className="flex h-[25px] flex-1 overflow-hidden rounded border border-[#d3d1ce] bg-[#eae9e8]">
                <input id="label-with" disabled className="min-w-0 flex-1" />
                <button aria-label="Choose label field" className="flex w-[25px] items-center justify-center border-l border-[#d3d1ce] bg-[#f2f1f0]"><Down dim /></button>
              </div>
              <SmallBtn label="Label expression" dim className="h-[25px] w-5"><Svg s={14} vb={14}><Eps size={20} x={2} y={12} c="#999" /></Svg></SmallBtn>
            </div>
            <div className="mt-[7px] flex h-[33px] shrink-0 items-end border-b border-[#b9b6b2]" role="tablist">
              {styleTabs.map((t, i) => (
                <button key={i} role="tab" aria-label={`Style section ${i + 1}`} className={`flex w-[45px] items-center rounded-t border border-b-0 ${i ? "h-[29px] border-[#c3c0bc] bg-linear-to-b from-[#edeceb] to-[#dddbd9] pl-2" : "relative -mb-px h-[33px] border-[#b9b6b2] bg-linear-to-b from-[#fcfcfc] to-[#f2f1f0] pb-0.5 pl-1.5"}`}>{t}</button>
              ))}
            </div>
            <div className="flex min-h-0 flex-1 overflow-hidden pt-[15px] text-[#a3a09d]">
              <div className="flex min-w-0 flex-1 flex-col pl-1.5">
                <div className="h-[25px] shrink-0">Text</div>
                {[["Font", "Ubuntu"], ["Style", "Medium Italic"]].map(([l, v], i) => (
                  <div key={l} className={`flex shrink-0 items-center gap-2.5 pr-2.5 ${i ? "mt-3.5" : ""}`}>
                    <span className="w-[90px]">{l}</span><Combo label={l} value={v} dim className="flex-1" /><Override />
                  </div>
                ))}
                <div className="mt-[9px] flex h-[22px] shrink-0 items-center gap-2.5 pr-2.5">
                  <span className="w-[90px]" />
                  <SmallBtn label="Underline" dim className="h-[22px] w-[22px] underline">U</SmallBtn><Override />
                  <SmallBtn label="Strikeout" dim className="ml-0.5 h-[22px] w-[22px] line-through">S</SmallBtn><Override />
                  <span className="flex-1" />
                  <SmallBtn label="Bold" dim className="h-[22px] w-[22px]">B</SmallBtn><Override />
                  <SmallBtn label="Italic" dim className="ml-0.5 h-[22px] w-[22px]">I</SmallBtn><Override />
                </div>
                <div className="mt-[9px] flex shrink-0 items-center gap-2.5 pr-2.5">
                  <label htmlFor="size" className="w-[90px]">Size</label><Spin id="size" value="11.0000" dim className="flex-1" /><Override />
                </div>
              </div>
              <Scroll thumb="h-[128px]" className="h-[190px]" />
            </div>
          </div>
          <Scroll thumb="h-[175px]" />
        </div>
        <div className="flex flex-1 items-center gap-2 pt-0.5 pl-px">
          <SmallBtn label="Undo style" className="h-[22px] w-5"><Turn c="#e07b35" s={14} /></SmallBtn>
          <SmallBtn label="Redo style" className="h-[22px] w-5"><Turn c="#6aa36c" flip s={14} /></SmallBtn>
          <span className="flex-1" />
          <Check id="live" checked /><label htmlFor="live">Live update</label>
          <SmallBtn label="Apply" className="ml-2 h-[25px] w-[83px]">Apply</SmallBtn>
        </div>
      </div>
    </div>
    <HHandle className="h-[9px]" />

    <DockTitle>Processing Toolbox</DockTitle>
    <input aria-label="Search" placeholder="Search..." className="mt-px mr-0.5 h-[25px] shrink-0 rounded border border-[#b4b1ad] border-t-[#9c9995] bg-white px-1 outline-none placeholder:text-[#9a9794]" />
    <div className="mt-px flex min-h-0 flex-1">
      <ul className="flex-1 overflow-hidden border border-[#bab7b3] bg-white text-[#3c3c3c]">
        {tools.map(([lv, n, st, ic]) => (
          <li key={n} className={`flex h-[19px] items-center whitespace-nowrap ${lv === 0 ? "pl-2" : lv === 1 ? "pl-[27px]" : "pl-[62px]"} ${st === "sel" ? "bg-linear-to-b from-[#e6e5e3] to-[#dad8d6]" : ""}`}>
            {lv < 2 && <span className={`flex ${lv === 0 ? "w-[15px]" : "w-4"}`}><TreeArrowIcon open={st === "o"} /></span>}
            {lv === 0 && <span className="mr-[3px] flex w-4">{ic}</span>}
            {lv === 2 && (ic ? <span className="mr-1.5 flex w-4">{ic}</span> : <span className="mr-1 flex w-4"><Q sel={st === "sel"} /></span>)}
            {n}
          </li>
        ))}
      </ul>
      <Scroll before="mb-8" thumb="h-[109px]" />
    </div>
    <p className="h-9 shrink-0 border border-[#3a7ccb] bg-[#57a8ff] pl-1 leading-[17px] text-white">
      You can add more algorithms to the toolbox, <a href="#enable" className="text-[#0000ee] underline">enable additional<br />providers.</a> &nbsp; <a href="#close" className="text-[#0000ee] underline">[close]</a>
    </p>
  </aside>
);

/* ---------- frame ---------- */

const TopBar = () => (
  <header className="flex h-6 shrink-0 items-center bg-linear-to-b from-[#5c594e] to-[#3f3e39] pr-2 pl-1.5 text-[#dfdbd2]">
    <strong className="flex-1">QGIS 2.18.20</strong>
    <div className="flex items-center">
      <Svg s={18} vb={18} className="mr-3.5"><path d="M5 1l5 6H7v7H4V7H0zM13 17l5-6h-3.500V4h-3v7H8z" fill="#dfdbd2" /></Svg>
      <span className="mr-2 flex h-5 w-5 items-center justify-center rounded-xs bg-[#dfdbd2] text-[12px] text-[#3f3e39]">En<sub className="text-[7px]">1</sub></span>
      <Svg s={16} vb={16} className="mr-3"><path d="M3.500 4l9 8L8 15.500V.5L12.500 4l-9 8" stroke="#dfdbd2" strokeWidth="1.500" /></Svg>
      <svg width="18" height="13" viewBox="0 0 18 13" className="mr-3.5" aria-hidden="true"><rect width="18" height="13" rx="1" fill="#dfdbd2" /><path d="M1 1l8 7 8-7M1 12l6-6M17 12l-6-6" stroke="#3f3e39" strokeWidth="1.300" fill="none" /></svg>
      <Svg s={18} vb={18} className="mr-3.5"><path d="M0 7h3l5-4v12l-5-4H0z" fill="#7f7c74" /><path d="M11 6l6 6M17 6l-6 6" stroke="#7f7c74" strokeWidth="1.500" /></Svg>
      <time className="mr-3">11:04</time>
      <Svg s={16} vb={16}><path d="M5 4a5 5 0 1 0 6 0M8 1v7" stroke="#dfdbd2" strokeWidth="2" /><circle cx="8" cy="8.500" r="6.800" stroke="#dfdbd2" strokeWidth="2" strokeDasharray="2 3.340" /></Svg>
    </div>
  </header>
);

const StatusBar = () => (
  <footer className="flex h-[33px] shrink-0 items-center justify-end border-t border-[#cfcdca] pt-px pr-3 whitespace-nowrap">
    <label htmlFor="coord" className="mr-1.5">Coordinate</label>
    <input id="coord" defaultValue="368062.79,3955755.49" className="h-[25px] w-[203px] rounded border border-[#b4b1ad] bg-white text-center text-[#3c3c3c] outline-none" />
    <button aria-label="Toggle extents" className="mr-3.5 ml-1"><Svg s={16} vb={16}><path d="M3 3l6 5M7 1l5 6M1 6l6 6M13 3l2-2M2 2l2 2" stroke="#333" strokeWidth="2" /><circle cx="9.500" cy="10.500" r="4" fill="#ddd" stroke="#333" /><circle cx="9.500" cy="10.500" r="1.500" fill="#333" /></Svg></button>
    <label htmlFor="scale" className="mr-1.5">Scale</label>
    <div className="flex h-[25px] w-[116px] overflow-hidden rounded border border-[#b4b1ad] bg-white text-[#3c3c3c]">
      <input id="scale" defaultValue="1:144" className="min-w-0 flex-1 px-1.5 outline-none" />
      <button aria-label="Scales" className="flex w-[25px] items-center justify-center border-l border-[#b4b1ad] bg-[#f5f4f3]"><Down /></button>
    </div>
    <button aria-label="Lock scale" className="mr-4 ml-1.5"><svg width="12" height="16" viewBox="0 0 12 16" aria-hidden="true"><path d="M2.500 8V5a3.500 3.500 0 0 1 7 0v3" stroke="#888" strokeWidth="1.800" fill="none" /><rect y="7" width="12" height="9" rx="1.500" fill="#555" /></svg></button>
    <label htmlFor="mag" className="mr-1.5">Magnifier</label>
    <Spin id="mag" value="100%" className="w-[90px]" />
    <label htmlFor="rot" className="mr-[13px] ml-3">Rotation</label>
    <Spin id="rot" value="0.0" className="mr-2.5 w-[90px]" />
    <Check id="render" checked /><label htmlFor="render" className="mr-[18px] ml-2">Render</label>
    <button className="flex w-36 items-center gap-1"><Svg s={16} vb={16}><circle cx="8" cy="8" r="6" stroke="#333" strokeWidth="2.500" /><path d="M8 0v16M0 8h16" stroke="#333" strokeWidth="1.500" /><circle cx="8" cy="8" r="2.500" fill="#f2f1f0" /></Svg>EPSG:32654 (OTF)</button>
    <button aria-label="Messages" className="ml-[18px]"><Svg s={16} vb={16}><path d="M8 1c5 0 8 2 8 6s-1 5-3 6l1 3-4-3c-6 1-10-2-10-6s3-6 8-6z" fill="#555" /><path d="M3.500 7h2M7 7h2M10.500 7h2" stroke="#fff" strokeWidth="2" /></Svg></button>
  </footer>
);

export default function App() {
  return (
    <div className="flex h-screen w-full flex-col overflow-hidden bg-[#f2f1f0] font-['Noto_Sans','Open_Sans',sans-serif] text-[14px] leading-[19px] text-[#4c4c4c]">
      <TopBar />
      <div className="flex min-h-0 flex-1">
        <Launcher />
        <div className="flex min-w-0 flex-1 flex-col">
          <Toolbar items={row1} hw="w-3" />
          <Toolbar items={row2} hw="w-[13px]" />
          <div className="flex min-h-0 flex-1">
            <div className="flex w-[60px] shrink-0 flex-col pl-0.5" role="toolbar">
              <HHandle className="h-2.5 w-[54px]" />
              {sideTools.map(([n, art, arrow]) => (
                <div key={n} className="flex h-9 items-center">
                  <button aria-label={n} className="flex w-9 justify-center"><Svg>{art}</Svg></button>
                  {arrow && <button aria-label={`${n} menu`} className="flex w-5 justify-center"><Down /></button>}
                </div>
              ))}
              <HHandle className="h-3.5 w-[54px]" />
            </div>
            <LeftDocks />
            <VHandle className="w-1.5" />
            <main className="relative min-w-0 flex-1 overflow-hidden border border-[#b9b6b2] bg-white">
              <MapDrawing />
              <Dialog />
            </main>
            <VHandle className="w-[7px]" />
            <RightDocks />
          </div>
          <StatusBar />
        </div>
      </div>
    </div>
  );
}
